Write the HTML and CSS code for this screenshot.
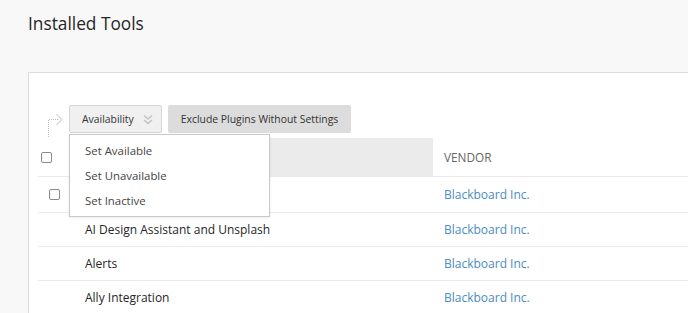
FILE: index.html
```html
<!DOCTYPE html>
<html lang="en">
<head>
    <meta charset="UTF-8">
    <title>Installed Tools</title>
    <link rel="stylesheet" href="styles.css">
</head>
<body>
    <h1 class="page-title">Installed Tools</h1>

    <div class="panel">
        <div class="toolbar">
            <svg class="bulk-arrow" width="22" height="27" viewBox="0 0 22 27">
                <path d="M4.5 27 V9.5 H15" fill="none" stroke="#bbb" stroke-width="1" stroke-dasharray="1 1"/>
                <path d="M12.5 4 L18 9.5 L12.5 15" fill="none" stroke="#bbb" stroke-width="1"/>
            </svg>

            <div class="menu-wrap">
                <button class="btn btn-open">Availability
                    <svg class="chevrons" width="10" height="11" viewBox="0 0 10 11">
                        <path d="M1 1.5 L5 5 L9 1.5 M1 6 L5 9.5 L9 6" fill="none" stroke="#c4c4c4" stroke-width="1.6"/>
                    </svg>
                </button>
                <!-- menu abierto -->
                <ul class="dropdown">
                    <li>Set Available</li>
                    <li>Set Unavailable</li>
                    <li>Set Inactive</li>
                </ul>
            </div>
            <button class="btn btn-gray">Exclude Plugins Without Settings</button>
        </div>

        <table class="tools-table">
            <thead>
                <tr>
                    <th class="col-check head-check"><input type="checkbox"></th>
                    <th class="col-name sorted"></th>
                    <th class="col-vendor">VENDOR</th>
                </tr>
            </thead>
            <tbody>
                <tr class="first-row">
                    <td class="col-check row-check"><input type="checkbox"></td>
                    <td class="col-name"></td>
                    <td class="col-vendor"><a href="#">Blackboard Inc.</a></td>
                </tr>
                <tr>
                    <td class="col-check"></td>
                    <td class="col-name">AI Design Assistant and Unsplash</td>
                    <td class="col-vendor"><a href="#">Blackboard Inc.</a></td>
                </tr>
                <tr>
                    <td class="col-check"></td>
                    <td class="col-name">Alerts</td>
                    <td class="col-vendor"><a href="#">Blackboard Inc.</a></td>
                </tr>
                <tr>
                    <td class="col-check"></td>
                    <td class="col-name">Ally Integration</td>
                    <td class="col-vendor"><a href="#">Blackboard Inc.</a></td>
                </tr>
            </tbody>
        </table>
    </div>
</body>
</html>
```

FILE: styles.css
```css
body {
    margin: 0;
    padding: 0;
    font-family: "Open Sans", Arial, sans-serif;
    background-color: #f8f8f8;
    color: #262626;
    overflow: hidden;
}

.page-title {
    margin: 0;
    padding: 12px 0 0 28px;
    font-size: 17.3px;
    font-weight: 400;
    line-height: 24px;
}

.panel {
    margin: 36px 0 0 28px;
    background-color: white;
    border: 1px solid #dcdcdc;
    border-right: none;
    border-bottom: none;
    padding-top: 32px;
    height: 208px;
}

.toolbar {
    display: flex;
    align-items: flex-start;
    padding-left: 15px;
    height: 33px;
}

.bulk-arrow {
    margin-top: 5px;
    margin-right: 3px;
}

.menu-wrap {
    position: relative;
}

.btn {
    font-family: inherit;
    font-size: 10.4px;
    color: #333;
    height: 28px;
    border: none;
    border-radius: 2px;
    white-space: nowrap;
    cursor: pointer;
}

.btn-open {
    width: 93px;
    background-color: #f0f0f0;
    border: 1px solid #d6d6d6;
    padding: 0 0 0 12px;
    text-align: left;
    display: flex;
    align-items: center;
}

.chevrons {
    margin-left: 9px;
}

.btn-gray {
    margin-left: 6px;
    background-color: #dcdcdc;
    width: 183px;
    padding: 0;
}

.dropdown {
    position: absolute;
    top: 29px;
    left: 0;
    z-index: 2;
    width: 199px;
    margin: 0;
    padding: 3px 0 3px 0;
    list-style: none;
    background-color: white;
    border: 1px solid #c9c9c9;
    box-shadow: 0 1px 3px rgba(0, 0, 0, 0.08);
}

.dropdown li {
    height: 25px;
    line-height: 25px;
    padding-left: 15px;
    font-size: 11.4px;
    color: #444;
}

.tools-table {
    margin-left: 9px;
    width: calc(100% - 9px);
    border-collapse: collapse;
    font-size: 12px;
}

.tools-table th {
    height: 38px;
    padding: 0;
    text-align: left;
    font-weight: 400;
    color: #666;
    font-size: 11.8px;
    border-bottom: 1px solid #ebebeb;
}

.tools-table td {
    height: 33px;
    padding: 0;
    border-bottom: 1px solid #ebebeb;
}

.tools-table .first-row td {
    height: 35px;
}

.col-check {
    width: 32px;
}

.col-name {
    width: 348px;
    padding-left: 15px !important;
}

.sorted {
    background-color: #ebebeb;
}

.col-vendor {
    padding-left: 11px !important;
}

.col-vendor a {
    color: #4a8cc0;
    text-decoration: none;
}

input[type="checkbox"] {
    appearance: none;
    width: 11px;
    height: 11px;
    margin: 0;
    border: 1px solid #8a8a8a;
    border-radius: 2px;
    background: white;
    display: block;
}

.head-check input {
    margin-left: 3px;
}

.row-check input {
    margin-left: 11px;
}
```
